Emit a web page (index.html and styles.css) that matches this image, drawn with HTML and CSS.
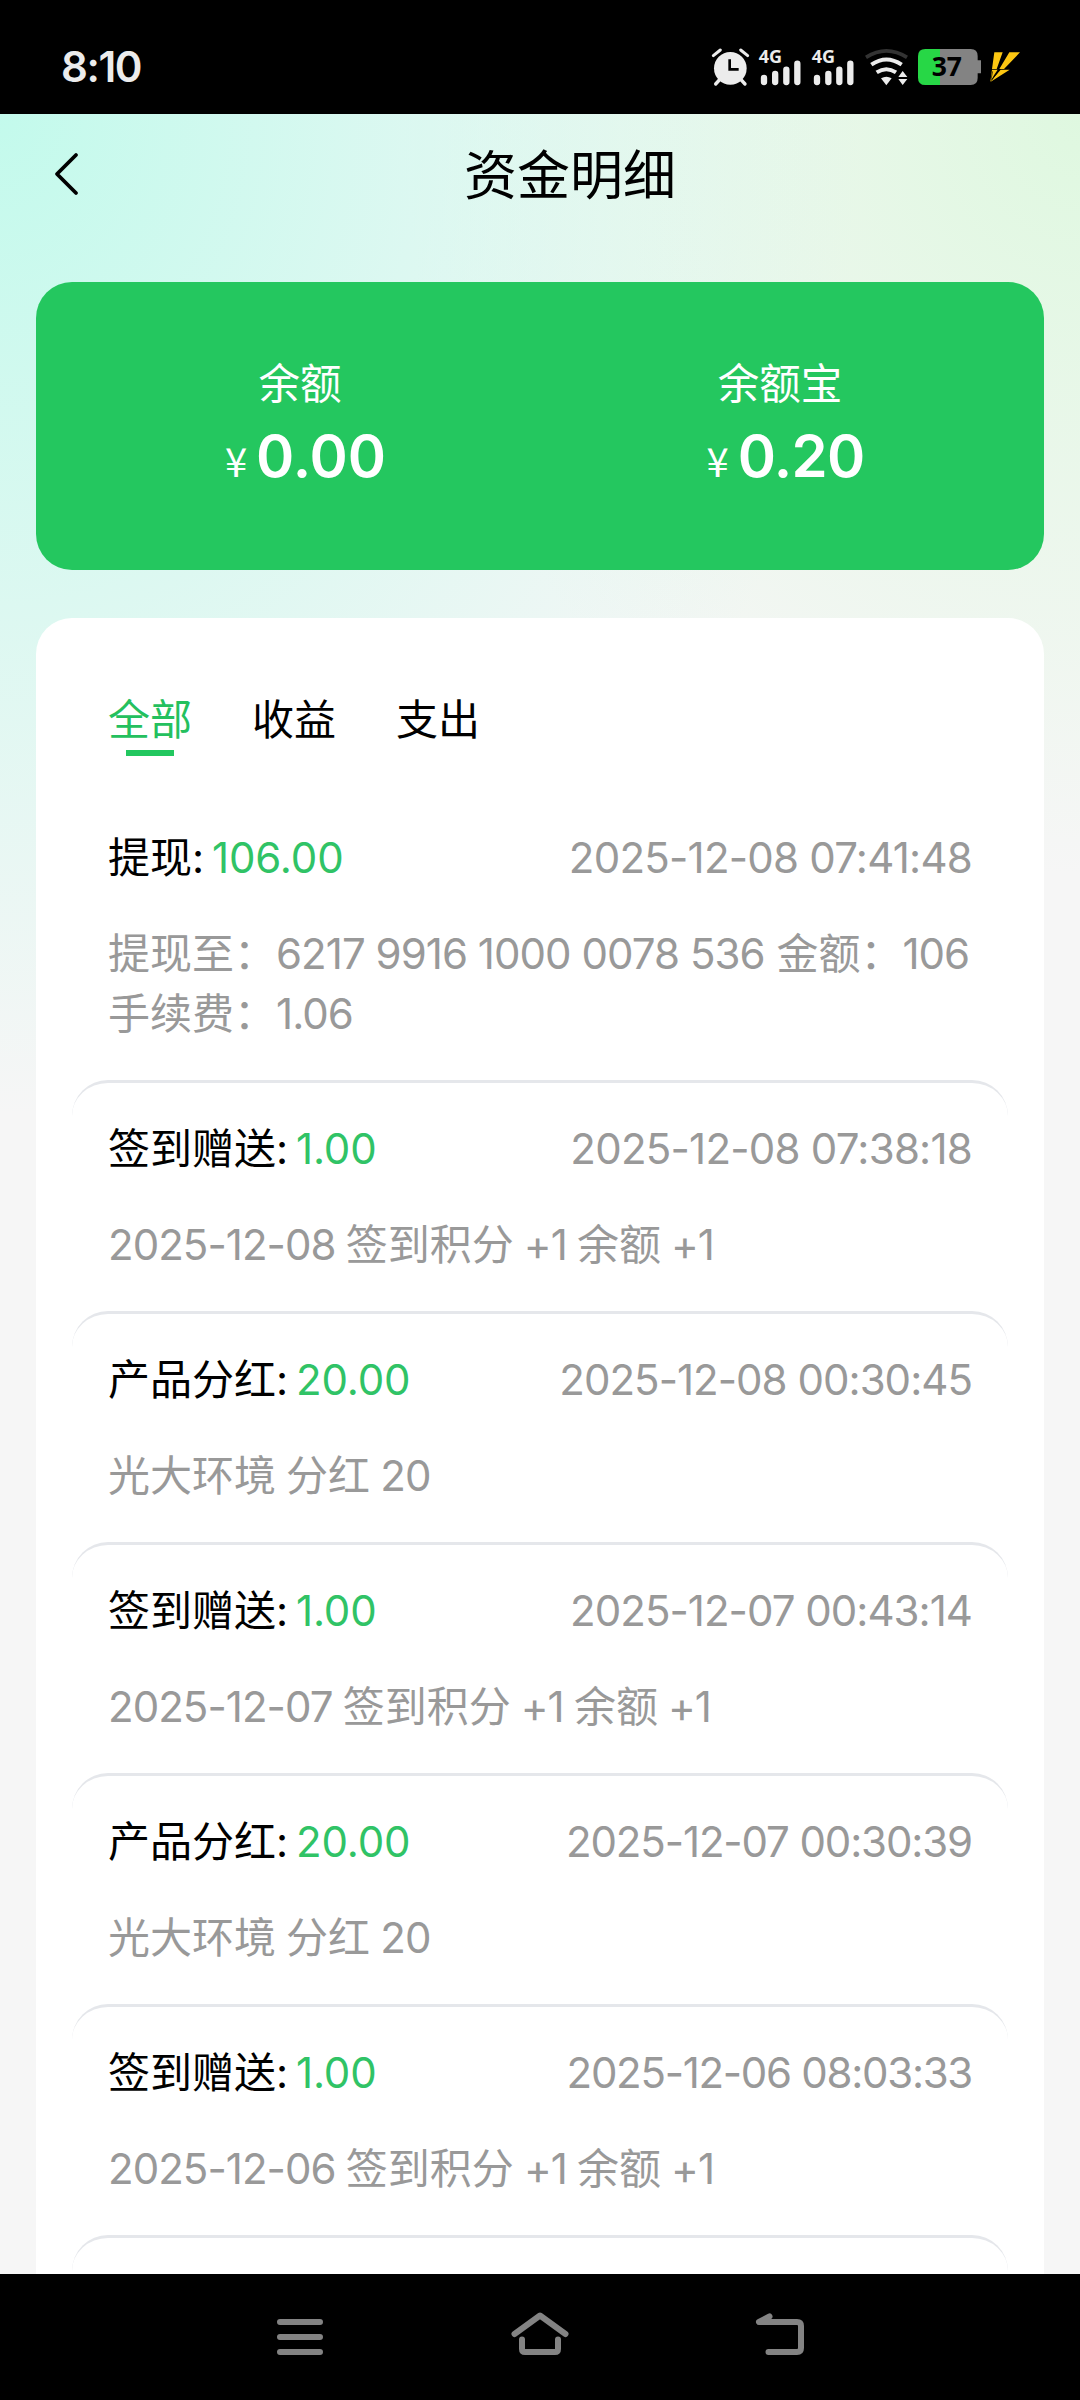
FILE: index.html
```html
<!DOCTYPE html>
<html lang="zh-CN">
<head>
<meta charset="utf-8">
<title>资金明细</title>
<link rel="stylesheet" href="styles.css">
</head>
<body>
<div class="screen">
  <div class="status">
    <span class="clock">8:10</span>
    <div class="status-icons">
      <svg width="66" height="80" viewBox="0 0 198 240">
        <circle cx="121" cy="115" r="49" fill="#ececec"/>
        <path d="M70 77L91 60M173 77L152 60" stroke="#ececec" stroke-width="9" stroke-linecap="round"/>
        <path d="M88 150L77 162M154 150L165 162" stroke="#ececec" stroke-width="10" stroke-linecap="round"/>
        <path d="M119 88V118H146" fill="none" stroke="#000" stroke-width="8"/>
      </svg>
      <svg width="53" height="80" viewBox="198 0 159 240">
        <text class="net" x="206" y="98" textLength="70" lengthAdjust="spacingAndGlyphs">4G</text>
        <path d="M222 144V156M255.500 132V156M289 119V156M322 101V156" stroke="#ececec" stroke-width="19" stroke-linecap="round"/>
      </svg>
      <svg width="54" height="80" viewBox="357 0 162 240">
        <text class="net" x="365" y="98" textLength="70" lengthAdjust="spacingAndGlyphs">4G</text>
        <path d="M381 144V156M415 132V156M448 119V156M481 101V156" stroke="#ececec" stroke-width="19" stroke-linecap="round"/>
      </svg>
      <svg width="53" height="80" viewBox="519 0 159 240">
        <path d="M528 82Q589 43 651 82" fill="none" stroke="#333" stroke-width="11"/>
        <path d="M544 104Q589 73 635 104M560 127Q589 108 618 127" fill="none" stroke="#ececec" stroke-width="12"/>
        <path d="M573 145Q589 136 605 145L589 166Z" fill="#ececec"/>
        <path d="M625 141L638 123L652 141ZM625 147H652L638 165Z" fill="#ececec"/>
      </svg>
      <svg width="70" height="80" viewBox="678 0 210 240">
        <path d="M750 57H842Q863 57 863 78V91H873V130H863V144Q863 165 842 165H750Z" fill="#838383"/>
        <path d="M750 57H706Q684 57 684 79V143Q684 165 706 165H750Z" fill="#27d746"/>
        <text class="level" x="725" y="139" textLength="91" lengthAdjust="spacingAndGlyphs">37</text>
      </svg>
      <svg width="54" height="80" viewBox="888 0 162 240">
        <path d="M913 67H938L920 117H906ZM958 67H990L942 117H928Z" fill="#fdc712"/>
        <path d="M906 119H923L912 136L901 155ZM932 119H959L901 156L916 138Z" fill="#fdc712"/>
        <path d="M908 124L903 148M925 124L905 150" stroke="#000" stroke-width="2"/>
      </svg>
    </div>
  </div>

  <div class="page">
    <div class="header">
      <svg class="back" width="60" height="60" viewBox="0 0 60 60"><path d="M40 11L21 30L40 49" fill="none" stroke="#000" stroke-width="3.800" stroke-linecap="round" stroke-linejoin="round"/></svg>
      <h1>资金明细</h1>
    </div>

    <div class="balance">
      <div class="account"><div class="label">余额</div><div class="sum"><span class="yen">¥</span><b>0.00</b></div></div>
      <div class="account"><div class="label">余额宝</div><div class="sum"><span class="yen">¥</span><b class="tight">0.20</b></div></div>
    </div>

    <div class="panel">
      <div class="tabs"><span class="tab active">全部</span><span class="tab">收益</span><span class="tab">支出</span></div>
      <div class="row first">
        <div class="line"><span>提现: <em>106.00</em></span><time class="k1">2025-12-08 07:41:48</time></div>
        <p>提现至：<i>6217 9916 1000 0078 536</i> 金额：<i>106</i><br>手续费：<i>1.06</i></p>
      </div>
      <div class="row">
        <div class="line"><span>签到赠送: <em>1.00</em></span><time class="k1">2025-12-08 07:38:18</time></div>
        <p class="note"><i>2025-12-08</i> 签到积分 <i>+1</i> 余额 <i>+1</i></p>
      </div>
      <div class="row">
        <div class="line"><span>产品分红: <em>20.00</em></span><time class="k2">2025-12-08 00:30:45</time></div>
        <p class="note">光大环境 分红 <i>20</i></p>
      </div>
      <div class="row">
        <div class="line"><span>签到赠送: <em>1.00</em></span><time class="k2">2025-12-07 00:43:14</time></div>
        <p class="note"><i>2025-12-07</i> 签到积分 <i>+1</i> 余额 <i>+1</i></p>
      </div>
      <div class="row">
        <div class="line"><span>产品分红: <em>20.00</em></span><time class="k3">2025-12-07 00:30:39</time></div>
        <p class="note">光大环境 分红 <i>20</i></p>
      </div>
      <div class="row">
        <div class="line"><span>签到赠送: <em>1.00</em></span><time class="k4">2025-12-06 08:03:33</time></div>
        <p class="note"><i>2025-12-06</i> 签到积分 <i>+1</i> 余额 <i>+1</i></p>
      </div>
      <div class="row"></div>
    </div>
  </div>

  <div class="nav">
    <svg width="60" height="60" viewBox="0 0 60 60"><path d="M10 15H50M10 30H50M10 45H50"/></svg>
    <svg width="60" height="60" viewBox="0 0 60 60"><path d="M4.500 27L30 8.500L55.500 27M12 32.500V42Q12 45 15 45H45Q48 45 48 42V32.500"/></svg>
    <svg width="60" height="60" viewBox="0 0 60 60"><path d="M19.500 9.500L9 15H47Q51 15 51 19V41Q51 45 47 45H18.500"/></svg>
  </div>
</div>
</body>
</html>
```
FILE: styles.css
```css
* { box-sizing: border-box; margin: 0; padding: 0; }
body { width: 1080px; height: 2400px; overflow: hidden; background: #000; }
.screen {
  width: 1080px; height: 2400px; display: flex; flex-direction: column;
  font: 400 42px/60px Inter, "Noto Sans CJK SC", sans-serif; color: #000;
}
.status { height: 114px; flex: none; padding: 30px 40px 4px 61px; display: flex; justify-content: space-between; background: #000; }
.clock { font-weight: 600; font-size: 42px; line-height: 74px; color: #ececec; letter-spacing: -1.4px; }
.status-icons { display: flex; }
.net { font: 700 51px "Noto Sans", sans-serif; fill: #ececec; }
.level { font: 700 80px "Noto Sans", sans-serif; fill: #000; }
.page {
  height: 2160px; flex: none; overflow: hidden; padding: 0 36px;
  background:
    radial-gradient(860px 1000px at 0 0, #c3faec 0%, rgba(195, 250, 236, 0) 100%),
    radial-gradient(680px 760px at 100% 0, #dff8e0 0%, rgba(223, 248, 224, 0) 100%),
    #f6f6f6;
}
.header { height: 120px; display: flex; align-items: center; }
.back { flex: none; }
.header h1 { flex: 1; padding-top: 3px; font-size: 53px; font-weight: 400; line-height: 72px; text-align: center; }
.balance { height: 288px; margin-top: 48px; padding: 72px 24px 0; border-radius: 36px; background: #24c75f; color: #fff; display: flex; }
.account { flex: 1; text-align: center; }
.label { height: 60px; font-size: 41.5px; }
.sum { height: 84px; padding-left: 11px; line-height: 84px; white-space: nowrap; }
.sum b { font-size: 58px; font-weight: 600; }
.sum .tight { letter-spacing: -0.7px; }
.yen { margin-right: 9px; font-family: "Noto Sans CJK SC", sans-serif; font-size: 40px; }
.panel { margin-top: 48px; height: 1700px; padding: 36px; border-radius: 36px 36px 0 0; background: #fff; }
.tabs { height: 135px; padding: 36px 36px 0; display: flex; gap: 60px; line-height: 60px; }
.tab { display: flex; flex-direction: column; align-items: center; }
.active { color: #24c05e; }
.active::after { content: ""; width: 48px; height: 6px; background: #22c75f; }
.row { height: 231px; padding: 36px; border-top: 3px solid #e5e7eb; border-radius: 36px; }
.first { height: 291px; border-color: transparent; }
.line { display: flex; justify-content: space-between; white-space: nowrap; }
.line em { margin-left: -4px; font-style: normal; color: #30c366; letter-spacing: -0.1px; }
.line time, .row p { color: #999; }
.k1 { letter-spacing: -0.76px; }
.k2 { letter-spacing: -0.97px; }
.k3 { letter-spacing: -1.13px; }
.k4 { letter-spacing: -1.29px; }
.row p { margin-top: 36px; white-space: nowrap; }
.row i { font-style: normal; letter-spacing: -0.95px; }
.note { word-spacing: -1.7px; }
.nav { height: 126px; flex: 1; display: flex; justify-content: center; gap: 180px; padding-top: 33px; background: #000; }
.nav path { fill: none; stroke: #838383; stroke-width: 6; stroke-linecap: round; stroke-linejoin: round; }
```
